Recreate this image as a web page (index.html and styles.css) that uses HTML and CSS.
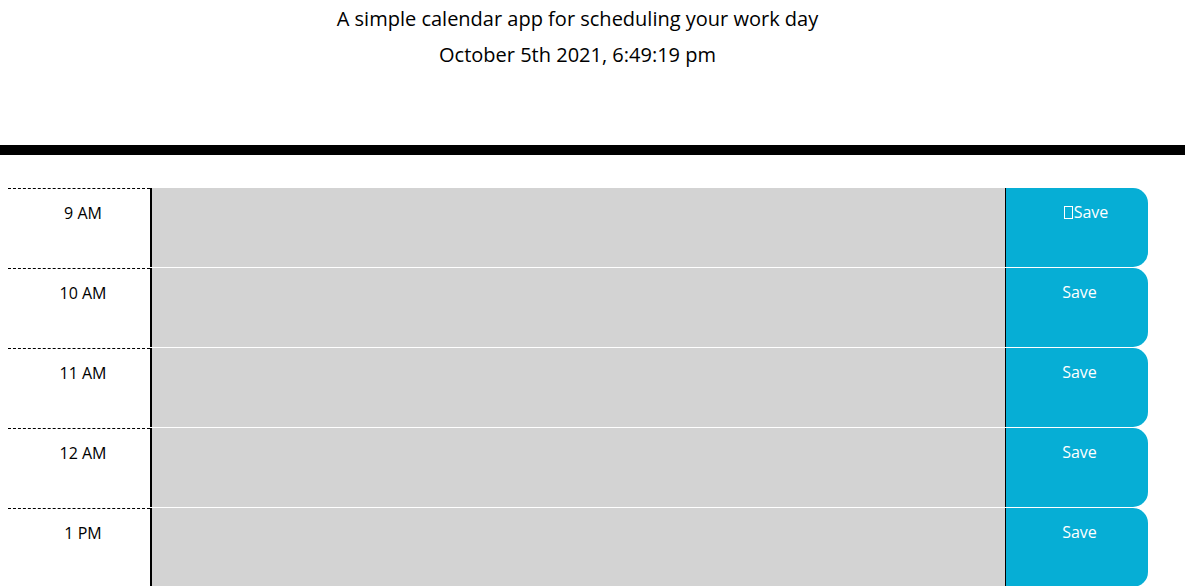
FILE: index.html
```html
<!DOCTYPE html>
<html lang="en">
<head>
<meta charset="utf-8">
<title>Work Day Scheduler</title>
<link rel="stylesheet" href="styles.css">
</head>
<body>
<header class="jumbotron">
  <p class="lead">A simple calendar app for scheduling your work day</p>
  <p class="current-day">October 5th 2021, 6:49:19 pm</p>
</header>
<main class="container">
  <div class="row">
    <div class="hour">9 AM</div>
    <textarea class="description past"></textarea>
    <button class="saveBtn"><span class="tofu"></span>Save</button>
  </div>
  <div class="row">
    <div class="hour">10 AM</div>
    <textarea class="description past"></textarea>
    <button class="saveBtn">Save</button>
  </div>
  <div class="row">
    <div class="hour">11 AM</div>
    <textarea class="description past"></textarea>
    <button class="saveBtn">Save</button>
  </div>
  <div class="row">
    <div class="hour">12 AM</div>
    <textarea class="description past"></textarea>
    <button class="saveBtn">Save</button>
  </div>
  <div class="row">
    <div class="hour">1 PM</div>
    <textarea class="description past"></textarea>
    <button class="saveBtn">Save</button>
  </div>
</main>
</body>
</html>
```
FILE: styles.css
```css
html, body {
  margin: 0;
  padding: 0;
  background: #fff;
  font-family: "Open Sans", "DejaVu Sans", sans-serif;
  color: #000;
}

.jumbotron {
  padding: 4px 30px 0 0;
  height: 141px;
  border-bottom: 10px solid #000;
  text-align: center;
}

.lead {
  margin: 0;
  font-size: 20px;
  line-height: 30px;
}

.current-day {
  margin: 6px 0 0;
  font-size: 20px;
  line-height: 30px;
}

.container {
  margin: 32px 0 0 8px;
  width: 1140px;
}

.row {
  display: grid;
  grid-template-columns: 142px 1fr 143px;
  height: 79px;
  border-top: 1px solid #fff;
}

.hour {
  border-top: 1px dashed #000;
  padding: 13px 0 0 8px;
  text-align: center;
  font-size: 16px;
  line-height: 22px;
  color: #000;
}

.description {
  margin: 0;
  border: none;
  border-left: 2px solid #000;
  resize: none;
  padding: 10px;
  font-family: inherit;
  font-size: 16px;
}

.past {
  background: #d3d3d3;
}

.saveBtn {
  margin: 0;
  border: none;
  border-left: 1px solid #000;
  border-top-right-radius: 15px;
  border-bottom-right-radius: 15px;
  background: #06aed5;
  color: #fff;
  font-family: inherit;
  font-size: 16px;
  line-height: 22px;
  padding: 13px 0 0 5px;
  display: flex;
  justify-content: center;
  align-items: flex-start;
}

.tofu {
  display: inline-block;
  width: 9px;
  height: 13px;
  border: 1px solid #fff;
  margin: 5px 1px 0 13px;
  box-sizing: border-box;
}
```
